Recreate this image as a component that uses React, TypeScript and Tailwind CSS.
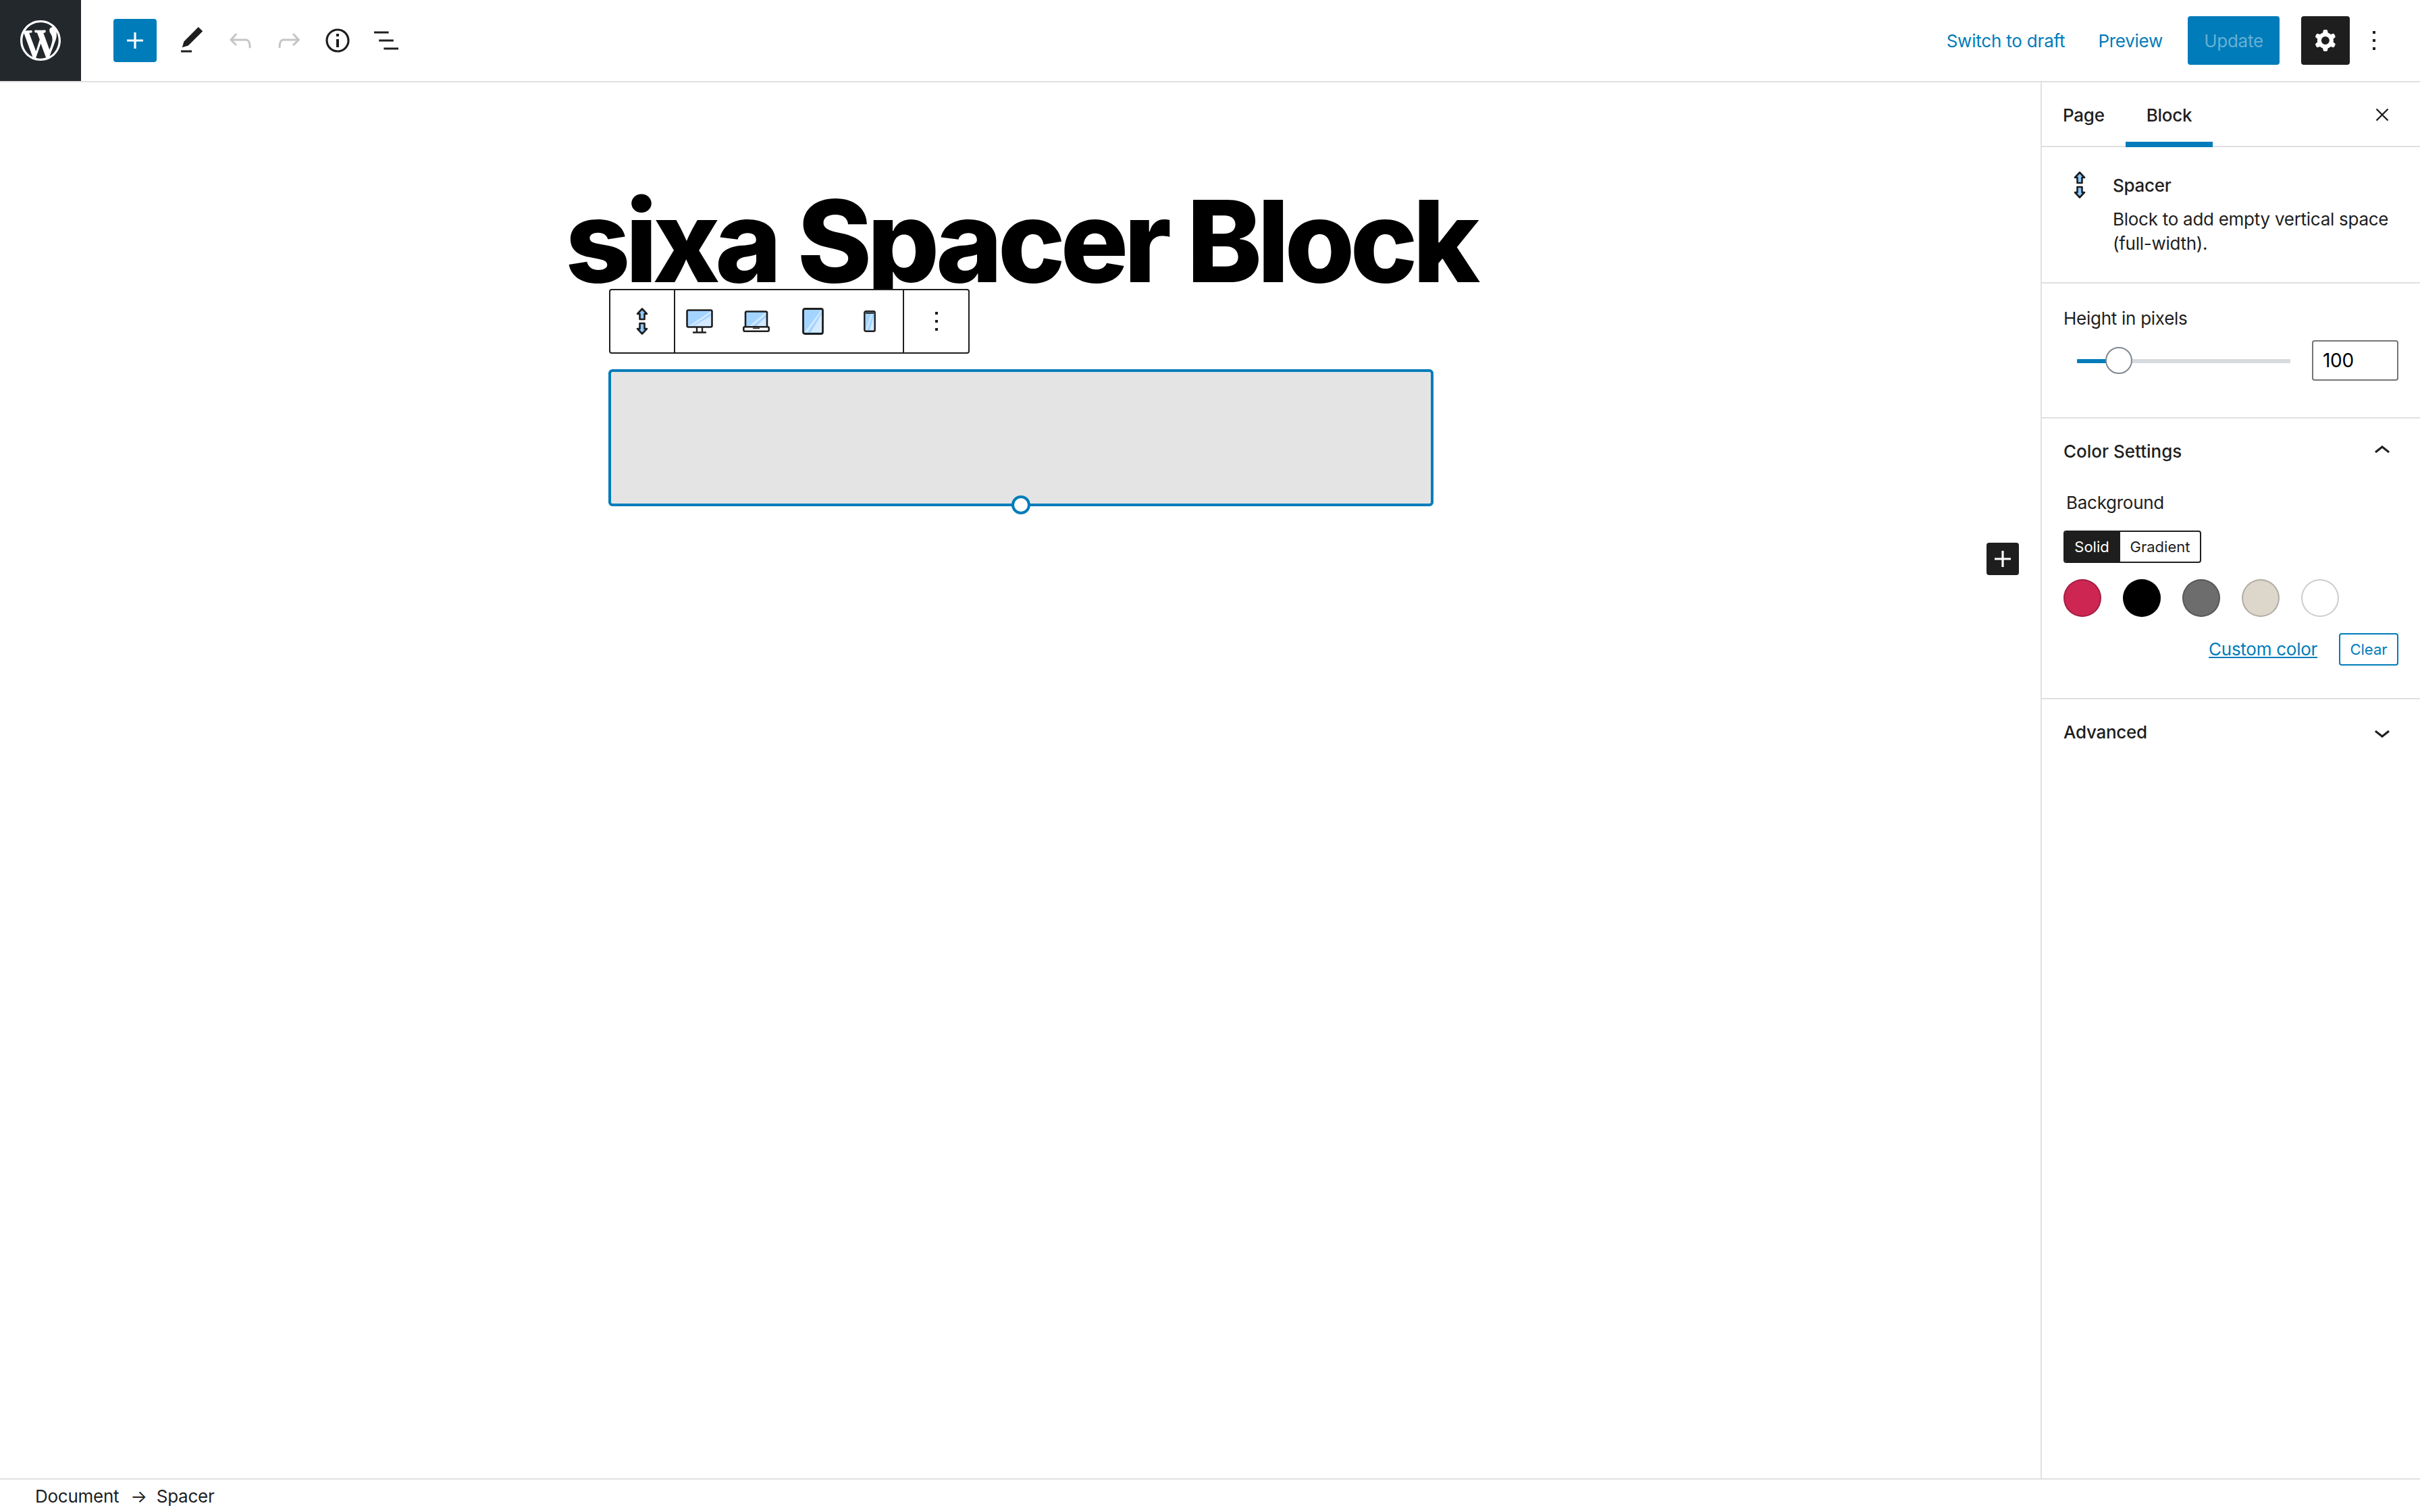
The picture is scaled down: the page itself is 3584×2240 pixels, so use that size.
import React from "react";

const ink = "#1e1e1e";

function Ico({ d, size = 48, box = 24, fill = ink, className = "" }: { d: string; size?: number; box?: number; fill?: string; className?: string }) {
  return (
    <svg width={size} height={size} viewBox={`0 0 ${box} ${box}`} fill={fill} className={`shrink-0 ${className}`}>
      <path d={d} fillRule="evenodd" />
    </svg>
  );
}

const P = {
  wp: "M20 10c0-5.51-4.49-10-10-10C4.48 0 0 4.49 0 10c0 5.52 4.48 10 10 10 5.51 0 10-4.48 10-10zM7.78 15.37L4.37 6.22c.55-.02 1.17-.08 1.17-.08.5-.06.44-1.13-.06-1.11 0 0-1.45.11-2.37.11-.18 0-.37 0-.58-.01C4.12 2.69 6.87 1.11 10 1.11c2.33 0 4.45.87 6.05 2.34-.68-.11-1.65.39-1.65 1.58 0 .74.45 1.36.9 2.1.35.61.55 1.36.55 2.46 0 1.49-1.4 5-1.4 5l-3.03-8.37c.54-.02.82-.17.82-.17.5-.05.44-1.25-.06-1.22 0 0-1.44.12-2.38.12-.87 0-2.33-.12-2.33-.12-.5-.03-.56 1.2-.06 1.22l.92.08 1.26 3.41zM17.41 10c.24-.64.74-1.87.43-4.25.7 1.29 1.05 2.71 1.05 4.25 0 3.29-1.73 6.24-4.4 7.78.97-2.59 1.94-5.2 2.92-7.78zM6.1 18.09C3.12 16.65 1.11 13.53 1.11 10c0-1.3.23-2.48.72-3.59C3.25 10.3 4.67 14.2 6.1 18.09zm4.03-6.63l2.58 6.98c-.86.29-1.76.45-2.71.45-.79 0-1.57-.11-2.29-.33.81-2.38 1.62-4.74 2.42-7.1z",
  plus: "M18 11.2h-5.2V6h-1.6v5.2H6v1.6h5.2V18h1.6v-5.2H18z",
  pen: "M20.1 5.1L16.9 2 6.2 12.7l-1.3 4.4 4.5-1.3L20.1 5.1zM4 20.8h8v-1.5H4v1.5z",
  undo: "M18.3 11.7c-.6-.6-1.4-.9-2.3-.9H6.7l2.9-3.3-1.1-1-4.5 5L8.5 16l1-1-2.7-2.7H16c.5 0 .9.2 1.3.5 1 1 1 3.4 1 4.5v.3h1.5v-.2c0-1.5 0-4.3-1.5-5.7z",
  redo: "M15.6 6.5l-1.1 1 2.9 3.3H8c-.9 0-1.7.3-2.3.9-1.4 1.5-1.4 4.2-1.4 5.6v.2h1.5v-.3c0-1.1 0-3.5 1-4.5.3-.3.7-.5 1.3-.5h9.2L14.5 15l1.1 1.1 4.6-4.6-4.6-5z",
  info: "M12 3.2c-4.8 0-8.8 3.9-8.8 8.8 0 4.8 3.9 8.8 8.8 8.8 4.8 0 8.8-3.9 8.8-8.8 0-4.8-4-8.8-8.8-8.8zm0 16c-4 0-7.2-3.3-7.2-7.2C4.8 8 8 4.8 12 4.8s7.2 3.3 7.2 7.2c0 4-3.2 7.2-7.2 7.2zM11 17h2v-6h-2v6zm0-8h2V7h-2v2z",
  list: "M13.8 5.2H3v1.5h10.8V5.2zm-3.6 12v1.5H21v-1.5H10.2zm7.2-6H6.6v1.5h10.8v-1.5z",
  cog: "M10.289 4.836A1 1 0 0111.275 4h1.306a1 1 0 01.987.836l.244 1.466c.787.26 1.503.679 2.108 1.218l1.393-.522a1 1 0 011.216.437l.653 1.13a1 1 0 01-.23 1.273l-1.148.944a6.025 6.025 0 010 2.435l1.149.946a1 1 0 01.23 1.272l-.653 1.13a1 1 0 01-1.216.437l-1.394-.522c-.605.54-1.32.958-2.108 1.218l-.244 1.466a1 1 0 01-.987.836h-1.306a1 1 0 01-.986-.836l-.244-1.466a5.995 5.995 0 01-2.108-1.218l-1.394.522a1 1 0 01-1.217-.436l-.653-1.131a1 1 0 01.23-1.272l1.149-.946a6.026 6.026 0 010-2.435l-1.148-.944a1 1 0 01-.23-1.272l.653-1.131a1 1 0 011.217-.437l1.393.522a5.994 5.994 0 012.108-1.218l.244-1.466zM14.929 12a3 3 0 11-6 0 3 3 0 016 0z",
  more: "M13 19h-2v-2h2v2zm0-6h-2v-2h2v2zm0-6h-2V5h2v2z",
  up: "M6.5 12.4L12 8l5.5 4.4-.9 1.2L12 10l-4.5 3.6-1-1.2z",
  down: "M17.5 11.6L12 16l-5.5-4.4.9-1.2L12 14l4.5-3.6 1 1.2z",
};

const BLUE = "#a3d4ff";
const PALE = "#d6eaff";

function SpacerIcon() {
  return (
    <svg width="20" height="44" viewBox="0 0 20 44" className="shrink-0">
      <path d="M10 3.500l7 7.500h-3.500v8h-7v-8h-3.500z" fill="#8ec9ff" stroke={ink} strokeWidth="2.6" strokeLinejoin="round" />
      <path d="M10 40.500l7-7.500h-3.500v-8h-7v8h-3.500z" fill="#8ec9ff" stroke={ink} strokeWidth="2.6" strokeLinejoin="round" />
    </svg>
  );
}

function Monitor() {
  return (
    <svg width="40" height="36" viewBox="0 0 40 36">
      <rect x="1.5" y="1.5" width="37" height="25" rx="2" fill={BLUE} />
      <path d="M37 10v15H11zM37 3v3L9 25H4z" fill={PALE} />
      <rect x="1.5" y="1.5" width="37" height="25" rx="2" fill="none" stroke={ink} strokeWidth="2.6" />
      <path d="M16 27v7M24 27v7M10 34.5h20" fill="none" stroke={ink} strokeWidth="2.4" />
    </svg>
  );
}

function Laptop() {
  return (
    <svg width="40" height="32" viewBox="0 0 40 32">
      <rect x="4" y="1.5" width="32" height="26" rx="2" fill={BLUE} />
      <path d="M34.5 10v16H17zM34.5 2.5v3L11 26H6z" fill={PALE} />
      <rect x="4" y="1.5" width="32" height="26" rx="2" fill="none" stroke={ink} strokeWidth="2.6" />
      <rect x="1.3" y="24.3" width="37.4" height="6.4" rx="1.6" fill="#fff" stroke={ink} strokeWidth="2.6" />
      <path d="M15 25.5h10v1.5h-10z" fill={ink} />
    </svg>
  );
}

function Tablet() {
  return (
    <svg width="32" height="40" viewBox="0 0 32 40">
      <rect x="1.5" y="1.5" width="29" height="37" rx="2.5" fill={BLUE} />
      <path d="M29 9v27H13zM29 2.500v3L8 36H4z" fill={PALE} />
      <rect x="1.5" y="1.5" width="29" height="37" rx="2.5" fill="none" stroke={ink} strokeWidth="2.8" />
    </svg>
  );
}

function Phone() {
  return (
    <svg width="18" height="32" viewBox="0 0 18 32">
      <rect x="1.300" y="1.300" width="15.400" height="29.400" rx="2" fill={BLUE} />
      <path d="M15 9v20H9zM14 3.500L5 29H3l9-25.500z" fill={PALE} />
      <rect x="1.300" y="1.300" width="15.400" height="29.400" rx="2" fill="none" stroke={ink} strokeWidth="2.4" />
      <path d="M3 3h12v1.800H3z" fill={ink} />
    </svg>
  );
}

const swatches = [
  "bg-[#cd2653]",
  "bg-[#000000]",
  "bg-[#6d6d6d]",
  "bg-[#dcd7ca]",
  "bg-[#ffffff]",
];

export default function App() {
  return (
    <div className="flex h-[2240px] w-[3584px] flex-col overflow-hidden bg-white font-[Inter,sans-serif] text-[26px] leading-[36px] tracking-[-0.27px] text-[#1e1e1e]">
      {/* Header */}
      <header className="flex h-[122px] shrink-0 items-center border-b-2 border-[#e0e0e0]">
        <div className="flex h-[120px] w-[120px] items-center justify-center bg-[#23282d]">
          <Ico d={P.wp} box={20} size={60} fill="#ffffff" />
        </div>
        <button className="ml-[48px] flex h-[64px] w-[64px] items-center justify-center rounded-[4px] bg-[#007cba]">
          <Ico d={P.plus} fill="#ffffff" />
        </button>
        <div className="ml-[28px] flex items-center gap-[24px]">
          <Ico d={P.pen} />
          <Ico d={P.undo} fill="#c5c5c5" />
          <Ico d={P.redo} fill="#c5c5c5" />
          <Ico d={P.info} />
          <Ico d={P.list} />
        </div>
        <div className="ml-auto flex items-center pr-[44px]">
          <span className="pt-[1px] tracking-[-0.2px] text-[#007cba]">Switch to draft</span>
          <span className="ml-[49px] pt-[1px] text-[#007cba]">Preview</span>
          <button className="ml-[37px] flex h-[72px] w-[136px] items-center justify-center rounded-[4px] bg-[#007cba] pt-[1px] text-[#66b0d6]">Update</button>
          <button className="ml-[32px] flex h-[72px] w-[72px] items-center justify-center rounded-[4px] bg-[#1e1e1e]">
            <Ico d={P.cog} fill="#ffffff" />
          </button>
          <Ico d={P.more} className="ml-[12px]" />
        </div>
      </header>

      {/* Body */}
      <div className="flex min-h-0 flex-1">
        <main className="relative flex min-w-0 flex-1 flex-col items-center pt-[151px]">
          <h1 className="text-center text-[168px] leading-[168px] font-extrabold tracking-[-7.1px] whitespace-nowrap text-black">sixa Spacer Block</h1>
          <div className="relative -mt-[13px] ml-[2px] w-[1222px]">
            <div className="ml-[1px] flex h-[96px] w-[534px] items-stretch rounded-[4px] border-2 border-[#1e1e1e] bg-white">
              <div className="flex w-[94px] items-center justify-center">
                <SpacerIcon />
              </div>
              <div className="flex w-[341px] items-center gap-[12px] border-x-2 border-[#1e1e1e]">
                <div className="flex w-[72px] justify-center"><Monitor /></div>
                <div className="flex w-[72px] justify-center"><Laptop /></div>
                <div className="flex w-[72px] justify-center"><Tablet /></div>
                <div className="flex w-[72px] justify-center"><Phone /></div>
              </div>
              <div className="flex flex-1 items-center justify-center">
                <Ico d={P.more} />
              </div>
            </div>
            <div className="relative mt-[23px] h-[203px] rounded-[6px] border-4 border-[#007cba] bg-[#e4e4e4]">
              <div className="absolute -bottom-[16px] left-1/2 h-[28px] w-[28px] -translate-x-1/2 rounded-full border-4 border-[#007cba] bg-white" />
            </div>
          </div>
          <button className="absolute top-[682px] left-[2942px] flex h-[48px] w-[48px] items-center justify-center rounded-[4px] bg-[#1e1e1e]">
            <Ico d={P.plus} fill="#ffffff" size={48} />
          </button>
        </main>

        {/* Sidebar */}
        <aside className="w-[562px] shrink-0 border-l-2 border-[#e0e0e0]">
          <div className="flex h-[96px] items-stretch shadow-[inset_0_-2px_0_#e0e0e0]">
            <div className="flex items-center border-y-[8px] border-transparent px-[31px] pt-[1px] font-medium">Page</div>
            <div className="flex items-center border-y-[8px] border-t-transparent border-b-[#007cba] px-[31px] pt-[1px] font-medium">Block</div>
            <div className="ml-auto flex items-center pr-[46px]">
              <svg width="20" height="20" viewBox="0 0 20 20" className="shrink-0">
                <path d="M1.500 1.500l17 17M18.500 1.500l-17 17" stroke={ink} strokeWidth="2.4" fill="none" />
              </svg>
            </div>
          </div>

          <section className="flex h-[202px] border-b-2 border-[#e0e0e0] pt-[32px] pl-[32px]">
            <div className="flex h-[48px] w-[48px] shrink-0 items-center justify-center">
              <SpacerIcon />
            </div>
            <div className="mt-[7px] ml-[25px] w-[440px]">
              <div className="font-medium">Spacer</div>
              <div className="mt-[14px] leading-[36px]">Block to add empty vertical space (full-width).</div>
            </div>
          </section>

          <section className="h-[200px] border-b-2 border-[#e0e0e0] px-[32px] pt-[34px]">
            <div>Height in pixels</div>
            <div className="mt-[14px] flex h-[60px] items-center">
              <div className="relative mt-[2px] ml-[20px] h-[6px] w-[316px] rounded-[1px] bg-[#d7dade]">
                <div className="h-full w-[62px] rounded-l-[1px] bg-[#007cba]" />
                <div className="absolute -top-[18px] left-[42px] h-[40px] w-[40px] rounded-full border-2 border-[#7e8993] bg-white" />
              </div>
              <div className="ml-auto flex h-[60px] w-[128px] items-center rounded-[4px] border-2 border-[#757575] pl-[14px] text-[28px] text-black">100</div>
            </div>
          </section>

          <section className="border-b-2 border-[#e0e0e0] px-[32px] pb-[48px]">
            <div className="flex h-[96px] items-center justify-between">
              <span className="pt-[2px] font-medium tracking-[0px]">Color Settings</span>
              <Ico d={P.up} />
            </div>
            <div className="mt-[11px] pl-[4px]">Background</div>
            <div className="mt-[23px] flex h-[48px] w-[204px] overflow-hidden rounded-[4px] border-2 border-[#1e1e1e] text-[22px] leading-[44px] tracking-normal">
              <div className="flex w-[82px] items-center justify-center bg-[#1e1e1e] pr-[2px] text-white">Solid</div>
              <div className="flex flex-1 items-center justify-center">Gradient</div>
            </div>
            <div className="mt-[24px] flex gap-[32px]">
              {swatches.map((c) => (
                <div key={c} className={`h-[56px] w-[56px] rounded-full ${c} shadow-[inset_0_0_0_2px_rgba(0,0,0,0.2)]`} />
              ))}
            </div>
            <div className="mt-[24px] flex h-[48px] items-center justify-end gap-[32px]">
              <span className="text-[#007cba] underline">Custom color</span>
              <button className="flex h-[48px] w-[88px] items-center justify-center rounded-[4px] border-2 border-[#007cba] text-[22px] tracking-normal text-[#007cba]">Clear</button>
            </div>
          </section>

          <section className="flex h-[98px] items-center justify-between px-[32px]">
            <span className="font-medium">Advanced</span>
            <Ico d={P.down} />
          </section>
        </aside>
      </div>

      {/* Footer */}
      <footer className="flex h-[50px] shrink-0 items-center border-t-2 border-[#e0e0e0] pt-[1px] pl-[52px]">
        <span>Document</span>
        <span className="mr-[14px] ml-[17px]">→</span>
        <span>Spacer</span>
      </footer>
    </div>
  );
}
